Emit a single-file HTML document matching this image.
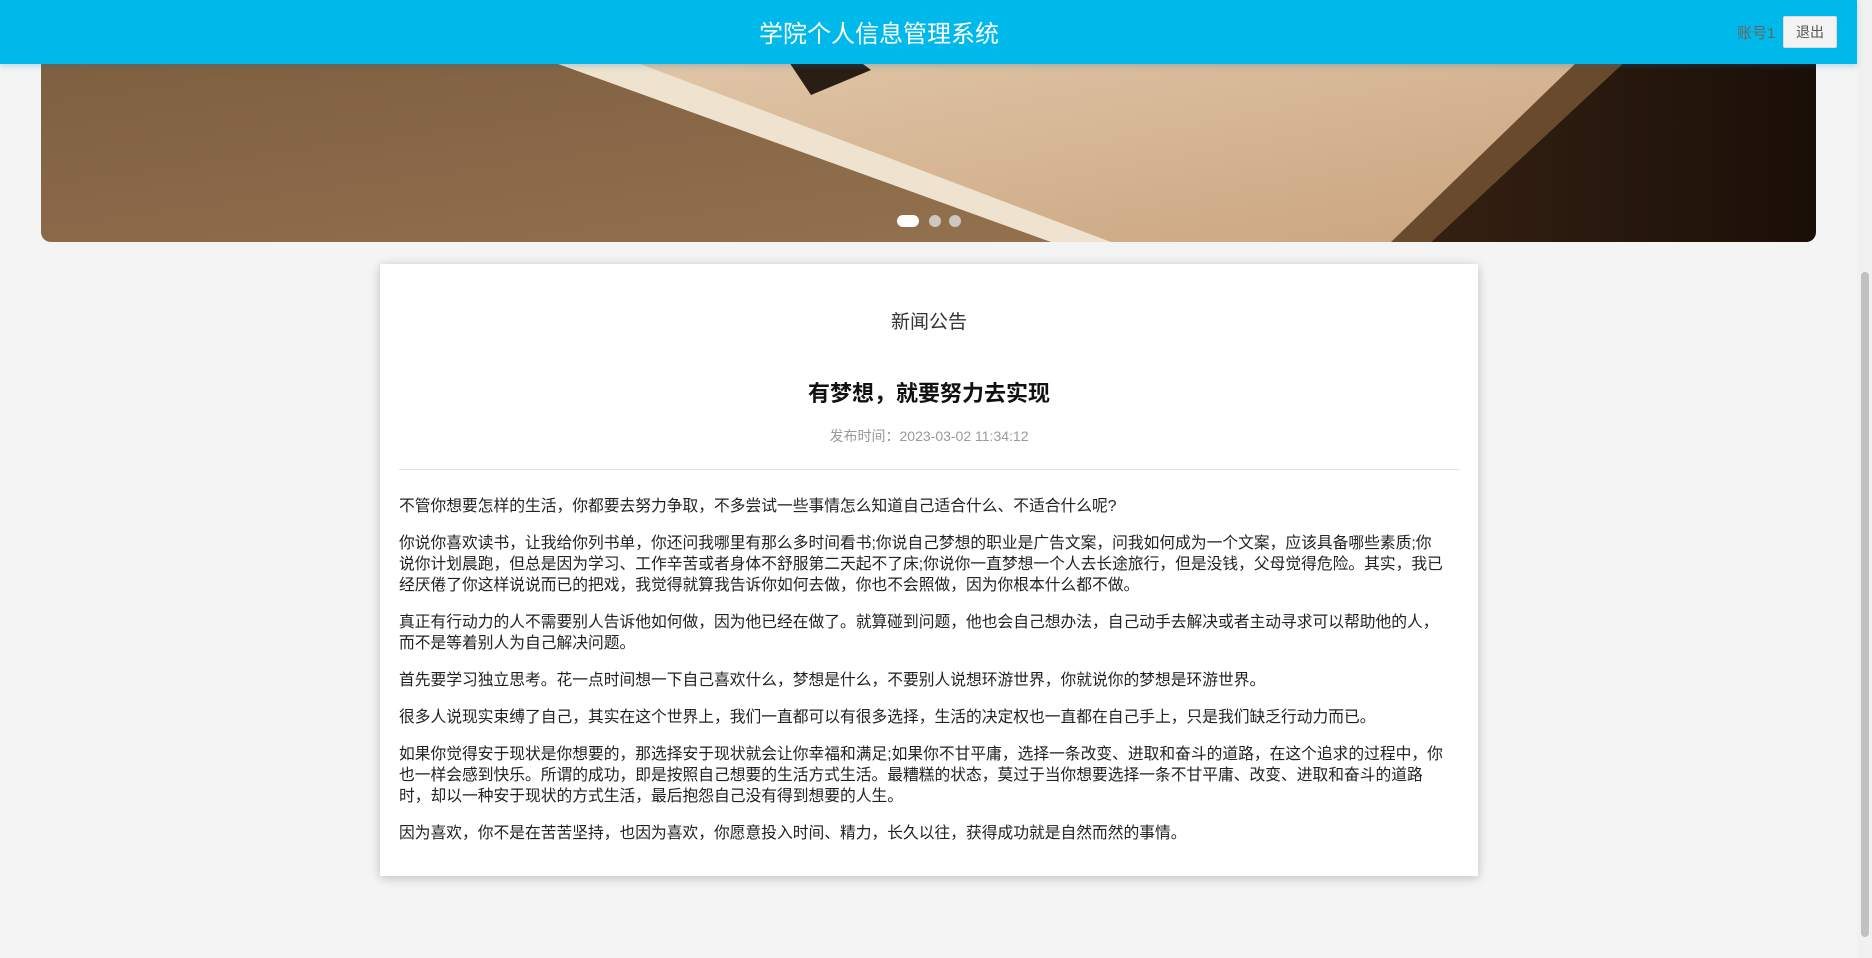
<!DOCTYPE html>
<html><head><meta charset="utf-8"><style>
*{margin:0;padding:0;box-sizing:border-box}
body{width:1872px;height:958px;overflow:hidden;background:#f4f4f4;font-family:"Liberation Sans","Noto Sans CJK SC",sans-serif;position:relative}
.hdr{position:absolute;left:0;top:0;width:1857px;height:64px;background:#00b9eb;box-shadow:0 2px 6px rgba(0,120,200,.25);z-index:5}
.ttl{position:absolute;left:0;width:1758px;text-align:center;top:19px;font-size:24px;color:#fff;line-height:32px}
.acc{position:absolute;left:1737px;top:24px;font-size:15px;color:#666;line-height:20px}
.btn{position:absolute;left:1783px;top:16px;width:54px;height:32px;background:#f3f3f3;border:1px solid #ddd;border-radius:2px;font-size:14px;color:#555;text-align:center;line-height:30px}
.sb{position:absolute;left:1857px;top:0;width:15px;height:958px;background:#f1f1f1}
.thumb{position:absolute;left:1861px;top:272px;width:8px;height:665px;background:#c1c1c1;border-radius:4px}
.ban{position:absolute;left:41px;top:0;width:1775px;height:242px;border-radius:0 0 10px 10px;overflow:hidden}
.card{position:absolute;left:380px;top:264px;width:1098px;height:612px;background:#fff;box-shadow:0 2px 10px rgba(0,0,0,.22)}
.h1,.h2,.dt{position:absolute;left:380px;width:1098px;text-align:center}
.h1{top:307px;font-size:19px;color:#333}
.h2{top:376px;font-size:22px;font-weight:bold;color:#111}
.dt{top:426px;font-size:14px;color:#999}
.hr{position:absolute;left:399px;width:1060px;top:469px;height:1px;background:#e2e2e2}
.body{position:absolute;left:399px;top:496px;width:1070px;font-size:15.75px;line-height:21px;color:#222;white-space:nowrap}
.body p{margin-bottom:16px}
</style></head><body>
<div class="ban"><svg width="1775" height="242" viewBox="0 0 1775 242">
<defs><linearGradient id="bg" x1="0" y1="0" x2="1" y2="1"><stop offset="0" stop-color="#7a5c3f"/><stop offset="1" stop-color="#9a7752"/></linearGradient>
<linearGradient id="pg" x1="0" y1="0" x2="1" y2="1"><stop offset="0" stop-color="#e6d0b4"/><stop offset="1" stop-color="#c9a27c"/></linearGradient>
<linearGradient id="dk" x1="0" y1="0" x2="1" y2="0"><stop offset="0" stop-color="#3a2414"/><stop offset="1" stop-color="#1a0f08"/></linearGradient></defs>
<rect width="1775" height="242" fill="url(#bg)"/>
<polygon points="1500,0 1775,0 1775,242 1300,242" fill="url(#dk)"/>
<polygon points="340,0 1650,0 1390,242 1020,242" fill="url(#pg)"/>
<polygon points="340,0 430,0 1070,242 1010,242" fill="#efe3cf"/>
<polygon points="1600,0 1650,0 1390,242 1350,242" fill="#6a4a2c"/>
<polygon points="740,50 790,40 830,70 770,95" fill="#2a1d14"/>
<rect x="856" y="215" width="22" height="12" rx="6" fill="#fff"/>
<circle cx="894" cy="221" r="6" fill="#ddd" opacity=".8"/>
<circle cx="914" cy="221" r="6" fill="#ddd" opacity=".8"/>
</svg></div>
<div class="hdr"><div class="ttl">学院个人信息管理系统</div><div class="acc">账号1</div><div class="btn">退出</div></div>
<div class="sb"></div><div class="thumb"></div>
<div class="card"></div>
<div class="h1">新闻公告</div>
<div class="h2">有梦想，就要努力去实现</div>
<div class="dt">发布时间：2023-03-02 11:34:12</div>
<div class="hr"></div>
<div class="body">
<p>不管你想要怎样的生活，你都要去努力争取，不多尝试一些事情怎么知道自己适合什么、不适合什么呢?</p>
<p>你说你喜欢读书，让我给你列书单，你还问我哪里有那么多时间看书;你说自己梦想的职业是广告文案，问我如何成为一个文案，应该具备哪些素质;你<br>说你计划晨跑，但总是因为学习、工作辛苦或者身体不舒服第二天起不了床;你说你一直梦想一个人去长途旅行，但是没钱，父母觉得危险。其实，我已<br>经厌倦了你这样说说而已的把戏，我觉得就算我告诉你如何去做，你也不会照做，因为你根本什么都不做。</p>
<p>真正有行动力的人不需要别人告诉他如何做，因为他已经在做了。就算碰到问题，他也会自己想办法，自己动手去解决或者主动寻求可以帮助他的人，<br>而不是等着别人为自己解决问题。</p>
<p>首先要学习独立思考。花一点时间想一下自己喜欢什么，梦想是什么，不要别人说想环游世界，你就说你的梦想是环游世界。</p>
<p>很多人说现实束缚了自己，其实在这个世界上，我们一直都可以有很多选择，生活的决定权也一直都在自己手上，只是我们缺乏行动力而已。</p>
<p>如果你觉得安于现状是你想要的，那选择安于现状就会让你幸福和满足;如果你不甘平庸，选择一条改变、进取和奋斗的道路，在这个追求的过程中，你<br>也一样会感到快乐。所谓的成功，即是按照自己想要的生活方式生活。最糟糕的状态，莫过于当你想要选择一条不甘平庸、改变、进取和奋斗的道路<br>时，却以一种安于现状的方式生活，最后抱怨自己没有得到想要的人生。</p>
<p>因为喜欢，你不是在苦苦坚持，也因为喜欢，你愿意投入时间、精力，长久以往，获得成功就是自然而然的事情。</p>
</div>
</body></html>
